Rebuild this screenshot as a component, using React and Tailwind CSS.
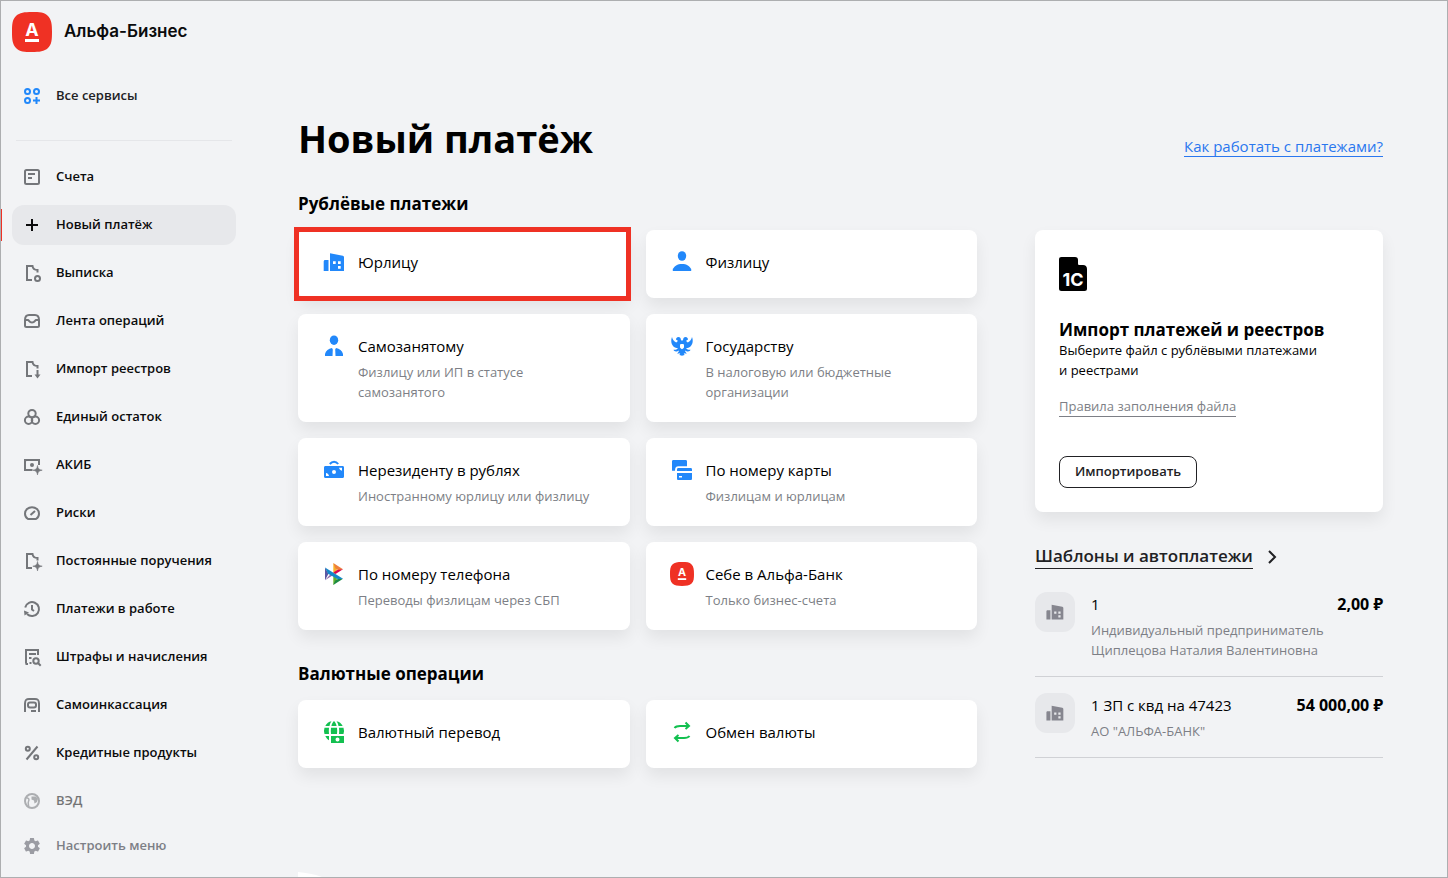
import { MdSettings } from "react-icons/md";

const DOC = "M12 19H7V5h5.5c.3 2.6 1.9 4 5 4v2.5";
const SPARKLE = "M17.5 12.5c.5 3.3 1.4 4.2 4.7 4.7-3.3.5-4.2 1.4-4.7 4.7-.5-3.3-1.4-4.2-4.7-4.7 3.3-.5 4.2-1.4 4.7-4.7z";

function LineIcon({ children, className = "text-[#74767a]" }) {
  return (
    <svg
      viewBox="0 0 24 24"
      className={`size-6 shrink-0 ${className}`}
      fill="none"
      stroke="currentColor"
      strokeWidth="2"
      aria-hidden="true"
    >
      {children}
    </svg>
  );
}

function SolidIcon({ children, className = "size-6 text-[#2288fa]" }) {
  return (
    <svg viewBox="0 0 24 24" className={`shrink-0 ${className}`} fill="currentColor" aria-hidden="true">
      {children}
    </svg>
  );
}

function AlfaLogo({ className }) {
  return (
    <svg viewBox="0 0 40 40" className={`shrink-0 ${className}`} aria-hidden="true">
      <path
        d="M20 0c7.5 0 12.5.3 16 4s4 8.5 4 16-.3 12.5-4 16-8.5 4-16 4-12.5-.3-16-4-4-8.5-4-16 .3-12.5 4-16 8.5-4 16-4z"
        fill="#ef3124"
      />
      <text x="20" y="24" textAnchor="middle" fill="#fff" fontSize="18" fontWeight="700" fontFamily="Inter, sans-serif">
        А
      </text>
      <rect x="13" y="27" width="14" height="3" fill="#fff" />
    </svg>
  );
}

function BuildingIcon({ className }) {
  return (
    <SolidIcon className={className}>
      <path
        fillRule="evenodd"
        d="M3.2 10h3.3v11H1.7v-9.5c0-.9.6-1.5 1.5-1.5zM8 3.3l12.8 2.5c.8.2 1.2.7 1.2 1.4V21H8zM11 11.3V14h2.7v-2.7zM16 11.3V14h2.7v-2.7zM16 16v2.7h2.7V16z"
      />
    </SolidIcon>
  );
}

const menu = [
  {
    label: "Счета",
    icon: (
      <LineIcon>
        <rect x="5" y="5" width="14" height="14" rx="1.5" />
        <path d="M8 9h7M8 13h4" />
      </LineIcon>
    ),
  },
  {
    label: "Новый платёж",
    active: true,
    icon: (
      <LineIcon className="text-[#0b0b0c]">
        <path d="M12 6v12M6 12h12" />
      </LineIcon>
    ),
  },
  {
    label: "Выписка",
    icon: (
      <LineIcon>
        <path d={DOC} />
        <circle cx="17.5" cy="17.5" r="2.5" />
      </LineIcon>
    ),
  },
  {
    label: "Лента операций",
    icon: (
      <LineIcon>
        <path d="M5 11v5.5c0 1 .5 1.5 1.5 1.5h11c1 0 1.5-.5 1.5-1.5V11c0-3-1.5-5-4-5H9c-2.5 0-4 2-4 5z" />
        <path d="M5 11h3c1 0 1.2 2.5 4 2.5s3-2.5 4-2.5h3" />
      </LineIcon>
    ),
  },
  {
    label: "Импорт реестров",
    icon: (
      <LineIcon>
        <path d={DOC} />
        <path d="M17.5 13v6" />
        <path d="M14.5 17.5h6l-3 4z" fill="currentColor" stroke="none" />
      </LineIcon>
    ),
  },
  {
    label: "Единый остаток",
    icon: (
      <LineIcon>
        <circle cx="12" cy="8.6" r="3.7" />
        <circle cx="8.6" cy="15.3" r="3.7" />
        <circle cx="15.4" cy="15.3" r="3.7" />
      </LineIcon>
    ),
  },
  {
    label: "АКИБ",
    icon: (
      <LineIcon>
        <path d="M12.5 17H5V7h14v5" />
        <path d="M4 6h5l-5 4zM20 6h-4l4 4zM4 18h4l-4-4z" fill="currentColor" stroke="none" />
        <circle cx="12" cy="12" r="2" fill="currentColor" stroke="none" />
        <path d={SPARKLE} fill="currentColor" stroke="currentColor" strokeWidth="0.6" />
      </LineIcon>
    ),
  },
  {
    label: "Риски",
    icon: (
      <LineIcon>
        <path d="M8 18h8c1.9-1.2 3-3.2 3-5.3a7 6.5 0 0 0-14 0c0 2.1 1.1 4.1 3 5.3z" />
        <path d="M10.5 14l4.5-4" />
      </LineIcon>
    ),
  },
  {
    label: "Постоянные поручения",
    icon: (
      <LineIcon>
        <path d={DOC} />
        <path d={SPARKLE} fill="currentColor" stroke="currentColor" strokeWidth="0.6" />
      </LineIcon>
    ),
  },
  {
    label: "Платежи в работе",
    icon: (
      <LineIcon>
        <path d="M5.2 10.5A7 7 0 1 1 7 17" />
        <path d="M12 8v4.5l2 1.5" />
        <path d="M4 13.5l5 2-4.5 3z" fill="currentColor" stroke="none" />
      </LineIcon>
    ),
  },
  {
    label: "Штрафы и начисления",
    icon: (
      <LineIcon>
        <path d="M18 10V5H6v13.5M9 9h7M9 13h2.5M5.5 19H8M9.5 18h2" />
        <circle cx="16" cy="16" r="2.7" />
        <path d="M18 18l2.7 2.7" />
      </LineIcon>
    ),
  },
  {
    label: "Самоинкассация",
    icon: (
      <LineIcon>
        <path d="M5 19v-8.5C5.2 7 6 6 9 6h6c3 0 3.8 1 4 4.5V19M11 18h5" />
        <rect x="8" y="9.5" width="8" height="5" rx="2" />
      </LineIcon>
    ),
  },
  {
    label: "Кредитные продукты",
    icon: (
      <LineIcon>
        <circle cx="7.8" cy="7.8" r="2" />
        <circle cx="16.2" cy="16.2" r="2" />
        <path d="M17.5 5.5l-11 13" />
      </LineIcon>
    ),
  },
  {
    label: "ВЭД",
    faded: true,
    icon: (
      <LineIcon>
        <circle cx="12" cy="12" r="7" />
        <path d="M6 8.5c3 .5 3.5 2 2.5 4s.5 3 0 6" strokeWidth="1.5" />
        <path d="M11.5 7.5h4l2.5 2-1 3.5-2.5 1.5-.5-3-2.5-1z" fill="currentColor" stroke="none" />
      </LineIcon>
    ),
  },
];

const rublePayments = [
  { title: "Юрлицу", highlighted: true, icon: <BuildingIcon /> },
  {
    title: "Физлицу",
    icon: (
      <SolidIcon>
        <ellipse cx="12" cy="6" rx="4.2" ry="4.8" />
        <path d="M2.8 21v-1.5C4 16 7.5 14 12 14s8 2 9.2 5.5V21z" />
      </SolidIcon>
    ),
  },
  {
    title: "Самозанятому",
    text: "Физлицу или ИП в статусе самозанятого",
    icon: (
      <SolidIcon>
        <ellipse cx="12" cy="6.2" rx="4.2" ry="4.8" />
        <path d="M3 22v-2c.8-3.3 3.500-5.3 7-6l.8 1.5-.3 6.5zM21 22v-2c-.8-3.3-3.5-5.3-7-6l-.8 1.5.3 6.5z" />
      </SolidIcon>
    ),
  },
  {
    title: "Государству",
    text: "В налоговую или бюджетные организации",
    icon: (
      <SolidIcon>
        <path
          fillRule="evenodd"
          d="M2 3c-1.5 4-.8 8.5 3 10.5 1 .5 2 .5 3 .5-1 1.5-2.5 2-4.5 1.8.5 1.7 2.5 2.2 4.5 1.2l1-.5c-.3 1.5-1 2.2-2 3 1.5.2 2.5 0 3.2-.5L9.500 21l2.5.8 2.5-.8-.7-2c.7.5 1.7.7 3.2.5-1-.8-1.7-1.5-2-3l1 .5c2 1 4 .5 4.5-1.2-2 .2-3.5-.3-4.5-1.8 1 0 2 0 3-.5 3.8-2 4.5-6.5 3-10.5-.5 2.5-2 4.5-4.2 5.5-1-.5-1.5-1-1.3-2 .2-.8 1-.8 1.5-.3.3-1.7-.8-3.2-2.5-3.2-1.5 0-2.3 1-2.3 2.5L12 7l-1.2-1.5c0-1.5-.8-2.5-2.3-2.5C6.8 3 5.7 4.5 6 6.2c.5-.5 1.3-.5 1.5.3.2 1-.3 1.5-1.3 2C4 7.5 2.5 5.5 2 3zM12 10c1.2 0 2 .5 2 .5V13c0 1-1 1.7-2 2.2-1-.5-2-1.2-2-2.2v-2.5s.8-.5 2-.5z"
        />
      </SolidIcon>
    ),
  },
  {
    title: "Нерезиденту в рублях",
    text: "Иностранному юрлицу или физлицу",
    icon: (
      <SolidIcon>
        <path
          fillRule="evenodd"
          d="M3.5 8h17c1 0 1.5.6 1.5 1.5v9c0 .9-.5 1.5-1.5 1.5h-17c-1 0-1.5-.6-1.5-1.5v-9C2 8.6 2.5 8 3.5 8zM12 12a2 2 0 1 0 0 4 2 2 0 0 0 0-4zM17 9.8c.5 1.5 1.3 2.5 3 3v-3zM4 15v3h3c-.4-1.7-1.3-2.7-3-3z"
        />
        <path d="M7.8 6c2.5-3 6-3 8.4 0" fill="none" stroke="currentColor" strokeWidth="2" />
      </SolidIcon>
    ),
  },
  {
    title: "По номеру карты",
    text: "Физлицам и юрлицам",
    icon: (
      <SolidIcon>
        <path d="M3.5 2h12c1 0 1.5.5 1.5 1.5V8.3H8.5C6 8.3 5 9.5 5 12.8H2V3.5C2 2.5 2.5 2 3.5 2z" />
        <path d="M8.5 10h12c1 0 1.5.5 1.5 1.5V13H7v-1.5C7 10.5 7.5 10 8.5 10z" />
        <path fillRule="evenodd" d="M7 15h15v5.5c0 1-.5 1.5-1.5 1.5h-12c-1 0-1.5-.5-1.5-1.5zM9 18v1.5h3V18z" />
      </SolidIcon>
    ),
  },
  {
    title: "По номеру телефона",
    text: "Переводы физлицам через СБП",
    icon: (
      <SolidIcon>
        <path d="M3 5.5l3.5 6.2L3 18.2z" fill="#5b57a2" />
        <path d="M11.3 1l3.5 5.3v4.2l-3.5 2.2z" fill="#f9b229" />
        <path d="M11.3 1L21 7.2l-4.3 1.3-3.2-2z" fill="#ee7f3b" />
        <path d="M21 7.2L13.5 12l-2.2-1.5 4-2.5z" fill="#d90751" />
        <path d="M11.3 11.8l3.5 2.7v4.3L11.3 23z" fill="#63b22f" />
        <path d="M21 16.8L11.3 23l2-4.5 3-1.7z" fill="#1c8a43" />
        <path d="M3 18.2l6.2-6.7 2 1.5z" fill="#9067a7" />
        <path d="M3 5.5L21 16.8l-5 .4-10-5.5z" fill="#1487c9" />
      </SolidIcon>
    ),
  },
  {
    title: "Себе в Альфа-Банк",
    text: "Только бизнес-счета",
    icon: <AlfaLogo className="size-6" />,
  },
];

const currencyOperations = [
  {
    title: "Валютный перевод",
    icon: (
      <SolidIcon className="size-6 text-[#13c050]">
        <path d="M9.5 1.3C8.5 2.5 8 4 7.5 6H3.3c1.3-2.5 3.5-4.2 6.2-4.7zM12 1c1.3 1.2 2.2 3 2.6 5H9.4c.4-2 1.3-3.8 2.6-5zM14.5 1.3c1 1.2 1.6 2.7 2 4.7h4.2c-1.3-2.5-3.5-4.2-6.2-4.7zM2.5 7.8H7a24 24 0 0 0 0 6.2H2.5a10 10 0 0 1 0-6.2zM9 7.8h6a24 24 0 0 1 0 6.2H9a24 24 0 0 1 0-6.2zM17 7.8h4.5a10 10 0 0 1 0 6.2H17a24 24 0 0 0 0-6.2zM3.3 16H7v4.3C5.4 19.3 4.2 18 3.3 16z" />
        <path fillRule="evenodd" d="M9 16h13v7H9zM15.5 17.5a2 2 0 1 0 0 4 2 2 0 0 0 0-4z" />
      </SolidIcon>
    ),
  },
  {
    title: "Обмен валюты",
    icon: (
      <LineIcon className="text-[#13c050]">
        <path d="M4.5 8C6 6 8 6 10 6h9M15.5 2.5L19 6l-3.5 3" />
        <path d="M19.5 16c-1.5 2-3.5 2-5.5 2H5M8.5 15L5 18l3.5 3.5" />
      </LineIcon>
    ),
  },
];

const templates = [
  { title: "1", text: "Индивидуальный предприниматель Щиплецова Наталия Валентиновна", sum: "2,00 ₽" },
  { title: "1 ЗП с квд на 47423", text: 'АО "АЛЬФА-БАНК"', sum: "54 000,00 ₽" },
];

function MenuItem({ item }) {
  return (
    <li className="relative">
      {item.active && <span className="absolute top-1 -left-[11px] h-8 w-px bg-[#ef3124]" />}
      <a
        href="#"
        aria-current={item.active ? "page" : undefined}
        className={`flex h-10 items-center gap-3 rounded-xl px-2 text-[13px] font-semibold text-[#0b0b0c] ${
          item.active ? "bg-[#e7e8eb]" : ""
        } ${item.faded ? "opacity-55" : ""}`}
      >
        {item.icon}
        {item.label}
      </a>
    </li>
  );
}

function PaymentCard({ card }) {
  return (
    <a
      href="#"
      className="relative flex min-h-[68px] gap-3 rounded-lg bg-white px-6 py-5 shadow-[0_8px_16px_rgba(0,0,0,0.07)]"
    >
      {card.icon}
      <span className="flex flex-col gap-1">
        <span className="text-[15px] leading-6 text-black">{card.title}</span>
        {card.text && <span className="max-w-[240px] text-[13px] leading-5 text-[#7d7f86]">{card.text}</span>}
      </span>
      {card.highlighted && (
        <span className="pointer-events-none absolute -top-[3px] -right-px -bottom-[3px] -left-1 border-5 border-[#ef3124]" />
      )}
    </a>
  );
}

function PaymentSection({ title, cards, className = "" }) {
  return (
    <section className={className}>
      <h2 className="text-[17px] leading-6 font-bold text-black">{title}</h2>
      <div className="mt-[14px] grid grid-cols-2 gap-4">
        {cards.map((card) => (
          <PaymentCard key={card.title} card={card} />
        ))}
      </div>
    </section>
  );
}

function Sidebar() {
  return (
    <nav className="w-[235px] shrink-0 pt-[11px] pl-[11px]">
      <a href="#" className="flex items-center gap-3 font-[Inter,sans-serif] text-[17px] font-semibold text-[#0b0b0c]">
        <AlfaLogo className="size-10" />
        Альфа-Бизнес
      </a>
      <a href="#" className="mt-6 flex h-10 items-center gap-3 px-2 text-[13px] font-semibold text-[#212124]">
        <LineIcon className="text-[#2288fa]">
          <circle cx="7.5" cy="7.5" r="2.5" />
          <circle cx="16.5" cy="7.5" r="2.5" />
          <circle cx="7.5" cy="16.5" r="2.5" />
          <path d="M16.5 13v7M13 16.5h7" />
        </LineIcon>
        Все сервисы
      </a>
      <hr className="mx-1 mt-6 border-[#e5e6e9]" />
      <ul className="mt-4 flex flex-col gap-2">
        {menu.map((item) => (
          <MenuItem key={item.label} item={item} />
        ))}
      </ul>
      <button type="button" className="mt-[5px] flex h-10 items-center gap-3 px-2 text-[13px] font-semibold text-[#7d7f86]">
        <span className="flex size-6 items-center justify-center">
          <MdSettings className="size-5 text-[#9b9ca3]" />
        </span>
        Настроить меню
      </button>
    </nav>
  );
}

function ImportCard() {
  return (
    <section className="rounded-lg bg-white p-6 shadow-[0_8px_16px_rgba(0,0,0,0.07)]">
      <svg viewBox="0 0 28 34" className="mt-[3px] h-[34px] w-7" aria-hidden="true">
        <path d="M2.5 0H16c2 0 3 1 3 3v3.5c0 1 .5 1.5 1.5 1.5H24c2.5 0 4 1.5 4 4v19.5c0 1.7-.8 2.5-2.5 2.5h-23C.8 34 0 33.2 0 31.5v-29C0 .8.8 0 2.5 0z" />
        <text x="14" y="29" textAnchor="middle" fill="#fff" fontSize="18" fontWeight="700" fontFamily="Inter, sans-serif">
          1С
        </text>
      </svg>
      <h2 className="mt-7 text-[17px] leading-[21px] font-bold text-black">Импорт платежей и реестров</h2>
      <p className="max-w-[280px] text-[13px] leading-5 text-black">Выберите файл с рублёвыми платежами и&nbsp;реестрами</p>
      <p className="mt-4 flex">
        <a href="#" className="border-b border-[#7d7f86] text-[13px] leading-5 text-[#7d7f86]">
          Правила заполнения файла
        </a>
      </p>
      <button
        type="button"
        className="mt-[39px] block h-8 rounded-lg border border-[#212124] px-[15px] text-[13px] font-semibold text-[#212124]"
      >
        Импортировать
      </button>
    </section>
  );
}

function Templates() {
  return (
    <section className="mt-8">
      <h2 className="flex items-center gap-3">
        <a href="#" className="border-b border-[#212124] text-[17px] leading-6 font-semibold text-[#212124]">
          Шаблоны и автоплатежи
        </a>
        <svg viewBox="0 0 16 16" className="size-4" fill="none" stroke="#212124" strokeWidth="2" aria-hidden="true">
          <path d="M4 2l6 6-6 6" />
        </svg>
      </h2>
      <ul className="mt-[7px]">
        {templates.map((item) => (
          <li key={item.title} className="flex gap-4 border-b border-[#d0d1d5] py-4">
            <span className="flex size-10 shrink-0 items-center justify-center rounded-xl bg-[#e7e8eb]">
              <BuildingIcon className="size-5 text-[#86868f]" />
            </span>
            <div className="min-w-0 flex-1">
              <div className="flex justify-between text-[15px] leading-6 text-black">
                <span>{item.title}</span>
                <span className="text-base leading-6 font-bold">{item.sum}</span>
              </div>
              <p className="mt-1 max-w-[250px] text-[13px] leading-5 text-[#7d7f86]">{item.text}</p>
            </div>
          </li>
        ))}
      </ul>
    </section>
  );
}

function App() {
  return (
    <div className="relative flex min-h-screen border border-[#adaeb0] bg-[#f2f3f5] font-['Open_Sans','Noto_Sans',sans-serif]">
      <Sidebar />
      <main className="min-w-0 flex-1 pt-[113px] pr-16 pl-[62px]">
        <header className="flex items-end justify-between">
          <h1 className="text-[38px] leading-12 font-bold text-black">Новый платёж</h1>
          <a href="#" className="mb-[5px] border-b border-[#2a77ef] text-[15px] leading-5 text-[#2a77ef]">
            Как работать с платежами?
          </a>
        </header>
        <div className="mt-[30px] flex gap-[58px]">
          <div className="min-w-0 flex-1">
            <PaymentSection title="Рублёвые платежи" cards={rublePayments} />
            <PaymentSection title="Валютные операции" cards={currencyOperations} className="mt-8" />
          </div>
          <aside className="w-[348px] shrink-0 pt-[38px]">
            <ImportCard />
            <Templates />
          </aside>
        </div>
      </main>
      <svg viewBox="0 0 24 5" className="absolute bottom-0 left-[297px] h-[5px] w-6" fill="#fff" aria-hidden="true">
        <path d="M0 0c8 1 16 2 24 5H0z" />
      </svg>
    </div>
  );
}

export default App;
